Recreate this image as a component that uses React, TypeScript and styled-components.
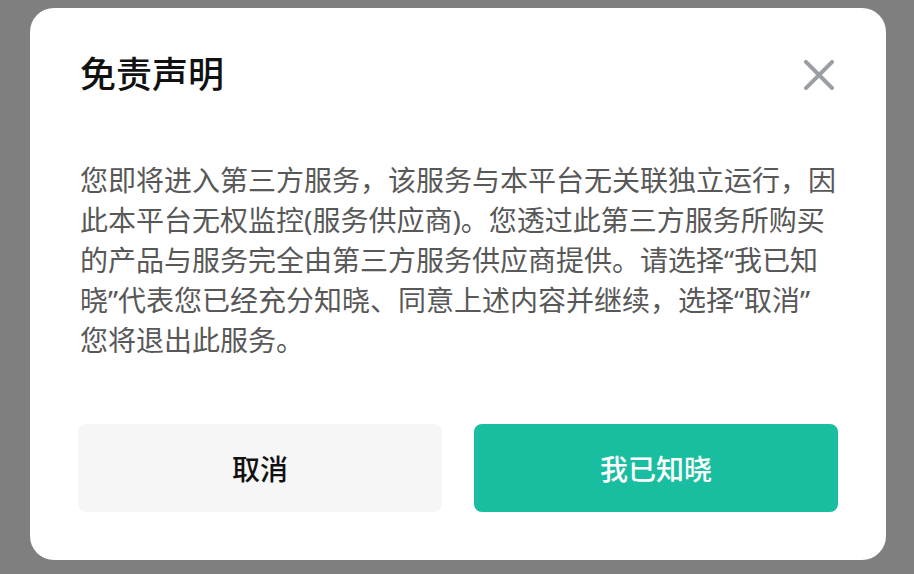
import styled, { createGlobalStyle } from "styled-components";

const GlobalStyle = createGlobalStyle`
  html, body {
    margin: 0;
    padding: 0;
    background: #7f7f7f;
  }
  body {
    font-family: "Noto Sans", "Noto Sans CJK SC", sans-serif;
  }
`;

const Overlay = styled.div({
  width: 914,
  height: 574,
  boxSizing: "border-box",
  padding: "8px 28px 14px 30px",
  display: "flex",
});

const Dialog = styled.div({
  flex: 1,
  background: "#ffffff",
  borderRadius: 24,
  padding: "40px 48px 48px",
  display: "flex",
  flexDirection: "column",
});

const Header = styled.div({
  display: "flex",
  alignItems: "center",
  justifyContent: "space-between",
  height: 54,
});

const Title = styled.h2({
  margin: 0,
  paddingLeft: 2,
  fontSize: 36,
  lineHeight: "54px",
  fontWeight: 500,
  color: "#111111",
});

const CloseButton = styled.button({
  border: "none",
  background: "transparent",
  padding: 0,
  marginRight: 2,
  width: 34,
  height: 34,
  display: "flex",
  alignItems: "center",
  justifyContent: "center",
  cursor: "pointer",
});

const Body = styled.p({
  margin: "58px 0 0",
  paddingLeft: 2,
  fontSize: 28,
  lineHeight: "40px",
  color: "#585858",
});

const Actions = styled.div({
  marginTop: "auto",
  display: "grid",
  gridTemplateColumns: "1fr 1fr",
  gap: 32,
});

const ActionButton = styled.button<{ $primary?: boolean }>(({ $primary }) => ({
  height: 88,
  border: "none",
  borderRadius: 8,
  fontFamily: "inherit",
  fontSize: 28,
  fontWeight: 500,
  background: $primary ? "#19bd9f" : "#f6f6f6",
  color: $primary ? "#ffffff" : "#111111",
  cursor: "pointer",
}));

const CloseIcon = () => (
  <svg width="30" height="30" viewBox="0 0 30 30">
    <path
      d="M2 2 L28 28 M28 2 L2 28"
      stroke="#9b9fa5"
      strokeWidth="4"
      strokeLinecap="square"
      fill="none"
    />
  </svg>
);

export default function App() {
  return (
    <>
      <GlobalStyle />
      <Overlay>
        <Dialog>
          <Header>
            <Title>免责声明</Title>
            <CloseButton aria-label="关闭">
              <CloseIcon />
            </CloseButton>
          </Header>
          <Body>
            您即将进入第三方服务，该服务与本平台无关联独立运行，因此本平台无权监控(服务供应商)。您透过此第三方服务所购买的产品与服务完全由第三方服务供应商提供。请选择“我已知晓”代表您已经充分知晓、同意上述内容并继续，选择“取消”
            <wbr />
            您将退出此服务。
          </Body>
          <Actions>
            <ActionButton>取消</ActionButton>
            <ActionButton $primary>我已知晓</ActionButton>
          </Actions>
        </Dialog>
      </Overlay>
    </>
  );
}
